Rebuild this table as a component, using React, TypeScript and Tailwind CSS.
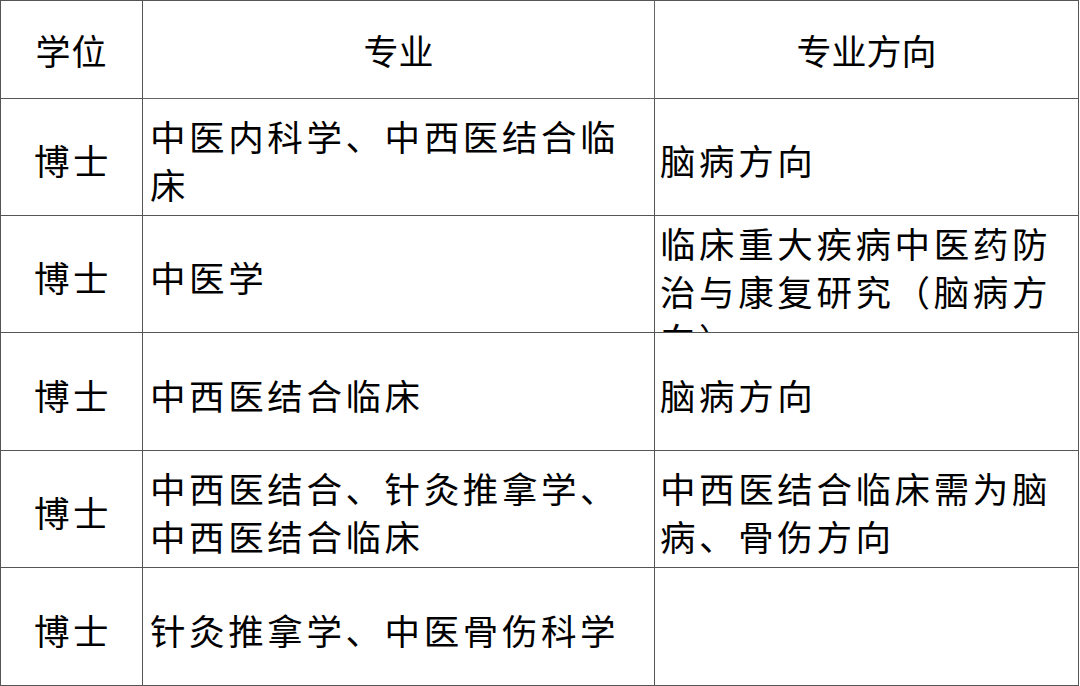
import React from "react";

const font = { fontFamily: '"Noto Sans CJK SC", "Noto Sans CJK JP", sans-serif' };

type Row = { deg: string; major: string[]; dir: string[]; top?: boolean };

const rows: { h: string; r: Row }[] = [
  { h: "h-[117px]", r: { deg: "博士", major: ["中医内科学、中西医结合临", "床"], dir: ["脑病方向"] } },
  { h: "h-[117px]", r: { deg: "博士", major: ["中医学"], dir: ["临床重大疾病中医药防", "治与康复研究（脑病方", "向）"], top: true } },
  { h: "h-[118px]", r: { deg: "博士", major: ["中西医结合临床"], dir: ["脑病方向"] } },
  { h: "h-[117px]", r: { deg: "博士", major: ["中西医结合、针灸推拿学、", "中西医结合临床"], dir: ["中西医结合临床需为脑", "病、骨伤方向"] } },
  { h: "h-[118px]", r: { deg: "博士", major: ["针灸推拿学、中医骨伤科学"], dir: [] } },
];

function Lines({ lines }: { lines: string[] }) {
  return (
    <div className="leading-[48px] whitespace-nowrap">
      {lines.map((l, i) => (
        <div key={i}>{l}</div>
      ))}
    </div>
  );
}

export default function App() {
  return (
    <div className="w-[1080px] h-[686px] bg-white overflow-hidden" style={font}>
      <div className="w-[1079px] border-l border-t border-[#555] text-black">
        <div className="grid grid-cols-[142px_512px_424px] h-[98px] text-[35px]">
          <div className="border-r border-b border-[#555] flex items-center justify-center pt-[2px] tracking-[1px]">学位</div>
          <div className="border-r border-b border-[#666] flex items-center justify-center pt-[2px]">专业</div>
          <div className="border-r border-b border-[#555] flex items-center justify-center pt-[2px]">专业方向</div>
        </div>
        {rows.map(({ h, r }, i) => (
          <div key={i} className={`grid grid-cols-[142px_512px_424px] text-[35.5px] tracking-[3.6px] ${h}`}>
            <div className="border-r border-b border-[#555] flex items-center justify-center pt-[6px] pl-[3px]">{r.deg}</div>
            <div className="border-r border-b border-[#555] flex items-center pl-[7px] pt-[6px] overflow-hidden">
              <Lines lines={r.major} />
            </div>
            <div
              className={`border-r border-b border-[#555] flex pl-[5px] overflow-hidden ${
                r.top ? "items-start pt-[3px]" : "items-center pt-[6px]"
              }`}
            >
              <Lines lines={r.dir} />
            </div>
          </div>
        ))}
      </div>
    </div>
  );
}
